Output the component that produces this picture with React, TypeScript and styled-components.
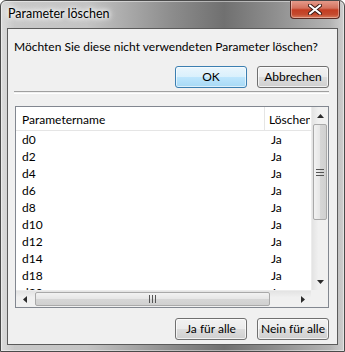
import React from "react";
import styled, { createGlobalStyle } from "styled-components";

const GlobalStyle = createGlobalStyle`
  html, body {
    margin: 0;
    padding: 0;
    background: #ffffff;
  }
  body {
    font-family: Lato, "Liberation Sans", sans-serif;
    font-size: 12px;
    color: #000;
  }
`;

const Window = styled.div`
  width: 345px;
  height: 352px;
  box-sizing: border-box;
  display: flex;
  flex-direction: column;
  padding: 0 6px 6px 6px;
  border: 1px solid #4a4a4a;
  border-radius: 6px 6px 0 0;
  background: linear-gradient(
      to right,
      rgba(255, 255, 255, 0.35) 0%,
      rgba(255, 255, 255, 0) 4%,
      rgba(255, 255, 255, 0) 96%,
      rgba(255, 255, 255, 0.25) 100%
    ),
    linear-gradient(
      to right,
      #c9c9c9 0%,
      #c4c4c4 25%,
      #8c8c8c 50%,
      #707070 65%,
      #8f8f8f 80%,
      #bdbdbd 100%
    );
  box-shadow: inset 0 0 0 1px rgba(255, 255, 255, 0.45);
  overflow: hidden;
`;

const TitleBar = styled.div`
  height: 27px;
  display: flex;
  justify-content: space-between;
  align-items: flex-start;
`;

const Title = styled.div`
  margin-top: 5px;
  padding: 0 6px 0 1px;
  font-size: 12.5px;
  line-height: 16px;
  color: #000;
  text-shadow: 0 0 8px #fff, 0 0 6px #fff, 0 0 4px #fff;
`;

const CloseButton = styled.div`
  width: 50px;
  height: 19px;
  margin-top: -1px;
  margin-right: -2px;
  box-sizing: border-box;
  border: 1px solid #5a2a22;
  border-top: none;
  border-radius: 0 0 4px 4px;
  background: linear-gradient(
    to bottom,
    #e8a090 0%,
    #d4725e 45%,
    #c43d22 55%,
    #c44a2e 80%,
    #d87a5c 100%
  );
  box-shadow: inset 0 0 0 1px rgba(255, 255, 255, 0.35);
  display: flex;
  align-items: center;
  justify-content: center;
`;

const Client = styled.div`
  flex: 1;
  display: flex;
  flex-direction: column;
  background: #f0f0f0;
  border: 1px solid #5b5b5b;
  padding: 0 8px 0 6px;
  min-height: 0;
`;

const Message = styled.div`
  margin-top: 10px;
  line-height: 16px;
  white-space: nowrap;
`;

const ButtonRow = styled.div<{ $top: number }>`
  display: flex;
  justify-content: flex-end;
  gap: 10px;
  margin-top: ${(p) => p.$top}px;
`;

const Button = styled.div<{ $default?: boolean }>`
  width: 72px;
  height: 22px;
  box-sizing: border-box;
  display: flex;
  align-items: center;
  justify-content: center;
  border-radius: 3px;
  border: 1px solid ${(p) => (p.$default ? "#3c7fb1" : "#707070")};
  background: ${(p) =>
    p.$default
      ? "linear-gradient(to bottom, #eaf6fd 0%, #d9f0fc 50%, #bee6fd 50%, #a7d9f5 100%)"
      : "linear-gradient(to bottom, #f2f2f2 0%, #ebebeb 50%, #dddddd 50%, #cfcfcf 100%)"};
  box-shadow: inset 0 0 0 1px
    ${(p) => (p.$default ? "rgba(255,255,255,0.6)" : "rgba(255,255,255,0.7)")};
  line-height: 16px;
  white-space: nowrap;
`;

const Separator = styled.div`
  margin-top: 3px;
  height: 1px;
  border-top: 1px solid #a0a0a0;
  border-bottom: 1px solid #ffffff;
`;

const ListBox = styled.div`
  margin-top: 12px;
  margin-left: 1px;
  height: 202px;
  box-sizing: border-box;
  border: 1px solid #828790;
  background: #ffffff;
  display: grid;
  grid-template-columns: 1fr 17px;
  grid-template-rows: 1fr 17px;
  overflow: hidden;
`;

const ListView = styled.div`
  overflow: hidden;
  display: flex;
  flex-direction: column;
`;

const HeaderRow = styled.div`
  height: 23px;
  flex-shrink: 0;
  display: grid;
  grid-template-columns: 249px 1fr;
  border-bottom: 1px solid #e5e5e5;
  background: #ffffff;
`;

const HeaderCell = styled.div<{ $divider?: boolean }>`
  display: flex;
  align-items: center;
  padding-left: ${(p) => (p.$divider ? 6 : 4)}px;
  padding-top: 1px;
  border-right: 1px solid ${(p) => (p.$divider ? "#e5e5e5" : "transparent")};
  white-space: nowrap;
  overflow: hidden;
  color: #000;
`;

const Row = styled.div`
  height: 17px;
  flex-shrink: 0;
  display: grid;
  grid-template-columns: 249px 1fr;
  line-height: 18px;
`;

const Cell = styled.div<{ $second?: boolean }>`
  padding-left: ${(p) => (p.$second ? 6 : 6)}px;
  white-space: nowrap;
`;

const VScroll = styled.div`
  display: flex;
  flex-direction: column;
  background: linear-gradient(to right, #e3e3e3, #f0f0f0 40%, #f0f0f0);
  border-left: 1px solid #ececec;
`;

const HScroll = styled.div`
  display: flex;
  background: linear-gradient(to bottom, #e3e3e3, #f0f0f0 40%, #f0f0f0);
  border-top: 1px solid #ececec;
`;

const ScrollCorner = styled.div`
  background: #f0f0f0;
`;

const Arrow = styled.div`
  width: 17px;
  height: 17px;
  flex-shrink: 0;
  display: flex;
  align-items: center;
  justify-content: center;
`;

const VThumb = styled.div`
  margin: 0 1px;
  height: 96px;
  box-sizing: border-box;
  border: 1px solid #a9a9a9;
  border-radius: 2px;
  background: linear-gradient(to right, #f2f2f2, #e6e6e6 50%, #d6d6d6 51%, #d0d0d0);
  display: flex;
  align-items: center;
  justify-content: center;
`;

const HThumb = styled.div`
  flex: 1;
  margin: 1px 0;
  box-sizing: border-box;
  border: 1px solid #a9a9a9;
  border-radius: 2px;
  background: linear-gradient(to bottom, #f2f2f2, #e6e6e6 50%, #d6d6d6 51%, #d0d0d0);
  display: flex;
  align-items: center;
  justify-content: center;
`;

const HTrack = styled.div`
  flex: 1;
  display: flex;
  padding: 0 24px 0 2px;
`;

const VTrack = styled.div`
  flex: 1;
`;

const rows = ["d0", "d2", "d4", "d6", "d8", "d10", "d12", "d14", "d18", "d20"];

const CloseIcon = () => (
  <svg width="14" height="11" viewBox="0 0 14 11">
    <path
      d="M2 1.5 L12 9.5 M12 1.5 L2 9.5"
      stroke="#3a1a14"
      strokeWidth="4"
      strokeLinecap="round"
    />
    <path
      d="M2 1.5 L12 9.5 M12 1.5 L2 9.5"
      stroke="#ffffff"
      strokeWidth="2.2"
      strokeLinecap="round"
    />
  </svg>
);

const Tri = ({ dir }: { dir: "up" | "down" | "left" | "right" }) => {
  const pts = {
    up: "0,4 3.5,0 7,4",
    down: "0,0 7,0 3.5,4",
    left: "4,0 4,7 0,3.5",
    right: "0,0 0,7 4,3.5",
  }[dir];
  const vert = dir === "up" || dir === "down";
  return (
    <svg width={vert ? 7 : 4} height={vert ? 4 : 7}>
      <polygon points={pts} fill="#2b2b2b" />
    </svg>
  );
};

const Grip = ({ vertical }: { vertical: boolean }) =>
  vertical ? (
    <svg width="8" height="7">
      <path d="M0 0.5H8M0 3.5H8M0 6.5H8" stroke="#555" strokeWidth="1" />
    </svg>
  ) : (
    <svg width="7" height="8">
      <path d="M0.5 0V8M3.5 0V8M6.5 0V8" stroke="#555" strokeWidth="1" />
    </svg>
  );

export default function App() {
  return (
    <>
      <GlobalStyle />
      <Window>
        <TitleBar>
          <Title>Parameter löschen</Title>
          <CloseButton>
            <CloseIcon />
          </CloseButton>
        </TitleBar>
        <Client>
          <Message>Möchten Sie diese nicht verwendeten Parameter löschen?</Message>
          <ButtonRow $top={11}>
            <Button $default>OK</Button>
            <Button>Abbrechen</Button>
          </ButtonRow>
          <Separator />
          <ListBox>
            <ListView>
              <HeaderRow>
                <HeaderCell $divider>Parametername</HeaderCell>
                <HeaderCell>Löschen</HeaderCell>
              </HeaderRow>
              {rows.map((r) => (
                <Row key={r}>
                  <Cell>{r}</Cell>
                  <Cell $second>Ja</Cell>
                </Row>
              ))}
            </ListView>
            <VScroll>
              <Arrow>
                <Tri dir="up" />
              </Arrow>
              <VThumb>
                <Grip vertical />
              </VThumb>
              <VTrack />
              <Arrow>
                <Tri dir="down" />
              </Arrow>
            </VScroll>
            <HScroll>
              <Arrow>
                <Tri dir="left" />
              </Arrow>
              <HTrack>
                <HThumb>
                  <Grip vertical={false} />
                </HThumb>
              </HTrack>
              <Arrow>
                <Tri dir="right" />
              </Arrow>
            </HScroll>
            <ScrollCorner />
          </ListBox>
          <ButtonRow $top={10}>
            <Button>Ja für alle</Button>
            <Button>Nein für alle</Button>
          </ButtonRow>
        </Client>
      </Window>
    </>
  );
}
